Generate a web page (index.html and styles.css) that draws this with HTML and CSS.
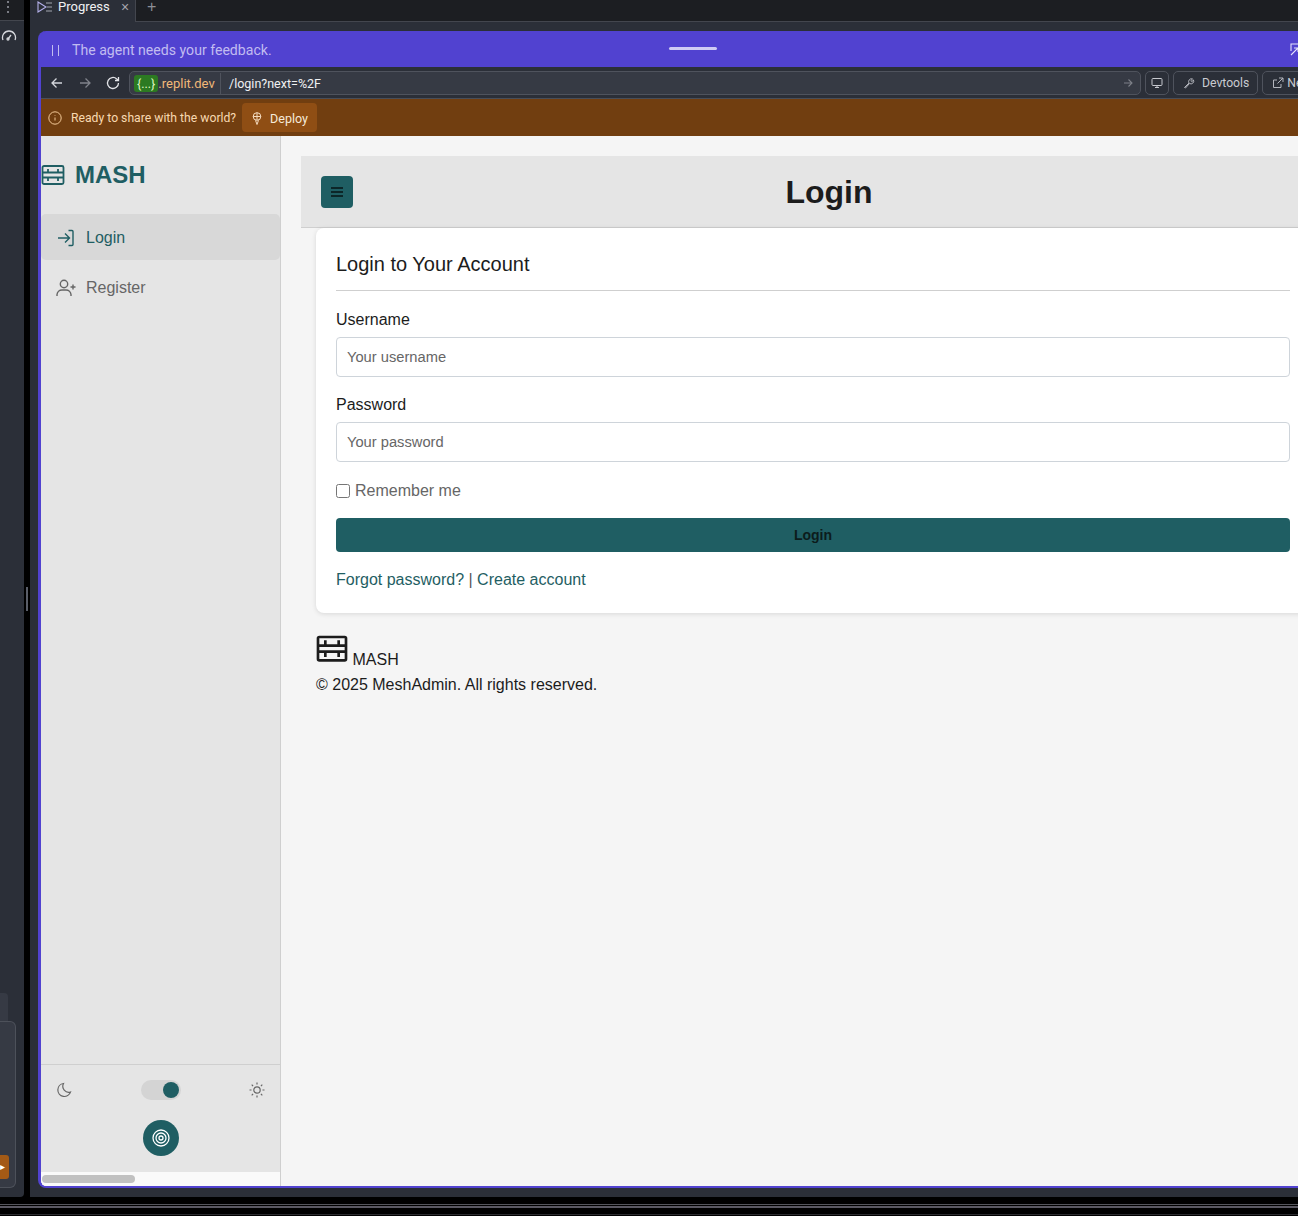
FILE: index.html
```html
<!DOCTYPE html>
<html lang="en">
<head>
  <meta charset="UTF-8">
  <meta name="viewport" content="width=device-width, initial-scale=1.0">
  <title>MASH Login</title>
  <link rel="stylesheet" href="styles.css">
</head>
<body>

  <div class="workspace">
    <!-- left editor pane, mostly cut off -->
    <aside class="leftPane">
      <div class="leftTop">
        <svg class="dots" width="4" height="14" viewBox="0 0 4 14"><circle cx="2" cy="2" r="1" fill="#9a9da6"/><circle cx="2" cy="7" r="1" fill="#9a9da6"/><circle cx="2" cy="12" r="1" fill="#9a9da6"/></svg>
      </div>
      <div class="leftGauge">
        <svg width="16" height="12" viewBox="0 0 16 12" fill="none" stroke="#d5d7dc" stroke-width="1.3"><path d="M2 10a6.500 6.500 0 1 1 12 0"/><path d="M7 9l3-4"/><circle cx="7" cy="9" r="1"/></svg>
      </div>
      <div class="leftTab"></div>
      <div class="leftBox">
        <span class="leftOrange">&#9656;</span>
      </div>
    </aside>

    <div class="divider"><span class="grip"></span></div>

    <section class="rightPane">
      <div class="tabBar">
        <div class="tab">
          <svg width="16" height="12" viewBox="0 0 16 12" fill="none" stroke="#b4b1ea" stroke-width="1.1"><path d="M1 1l8 5-8 5z"/><path d="M9 2h6M10 6h5M9 10h6" stroke="#a4a7b0"/></svg>
          <span class="tabTitle">Progress</span>
          <span class="tabClose">&#215;</span>
        </div>
        <span class="tabAdd">+</span>
      </div>

      <div class="previewWrap">
        <div class="preview">
          <div class="agentBar">
            <span class="pause"><i></i><i></i></span>
            <span class="agentText">The agent needs your feedback.</span>
            <span class="dragHandle"></span>
            <svg class="popout" width="14" height="14" viewBox="0 0 14 14" fill="none" stroke="#e4e2fa" stroke-width="1.1"><path d="M1 9V2h12v9H8"/><path d="M1 13l7-7M4 6h4v4"/></svg>
          </div>

          <div class="urlBar">
            <svg class="navIcon" width="14" height="14" viewBox="0 0 14 14" fill="none" stroke="#d4d6db" stroke-width="1.3"><path d="M12 7H2M6.500 2.500L2 7l4.500 4.500"/></svg>
            <svg class="navIcon" width="14" height="14" viewBox="0 0 14 14" fill="none" stroke="#80838b" stroke-width="1.3"><path d="M2 7h10M7.500 2.500L12 7l-4.500 4.500"/></svg>
            <svg class="navIcon" width="16" height="16" viewBox="0 0 16 16" fill="none" stroke="#e2e3e7" stroke-width="1.3"><path d="M13.500 8A5.500 5.500 0 1 1 11.700 3.900L13.500 5.500"/><path d="M13.500 2v3.500H10"/></svg>
            <div class="urlField">
              <div class="urlHost"><span class="urlBadge">{...}</span><span class="urlDomain">.replit.dev</span></div>
              <span class="urlPath">/login?next=%2F</span>
              <svg class="urlGo" width="10" height="10" viewBox="0 0 10 10" fill="none" stroke="#7c7f87" stroke-width="1.1"><path d="M1 5h8M5.500 1.500L9 5 5.500 8.500"/></svg>
            </div>
            <button class="urlBtn iconOnly">
              <svg width="12" height="12" viewBox="0 0 12 12" fill="none" stroke="#c6c8ce" stroke-width="1"><rect x="1" y="1.500" width="10" height="7" rx="1"/><path d="M6 8.500v2M4 10.500h4"/></svg>
            </button>
            <button class="urlBtn">
              <svg width="12" height="12" viewBox="0 0 12 12" fill="none" stroke="#b3b5bc" stroke-width="1"><path d="M1.500 10.500l4.500-4.500a2.800 2.800 0 0 1 3.500-4L7.800 3.700l1 1 1.700-1.700a2.800 2.800 0 0 1-4 3.500l-4 4.500z"/></svg>
              <span>Devtools</span>
            </button>
            <button class="urlBtn">
              <svg width="12" height="12" viewBox="0 0 12 12" fill="none" stroke="#b3b5bc" stroke-width="1"><path d="M9 7v3.500H1.500V3H5M7 1h4v4M11 1L5.500 6.500"/></svg>
              <span>New tab</span>
            </button>
          </div>

          <div class="deployBar">
            <svg width="14" height="14" viewBox="0 0 14 14" fill="none" stroke="#f3c998" stroke-width="1"><circle cx="7" cy="7" r="6.200"/><path d="M7 6.500v3M7 4.200v.6"/></svg>
            <span class="deployText">Ready to share with the world?</span>
            <button class="deployBtn">
              <svg width="12" height="13" viewBox="0 0 12 13" fill="none" stroke="#f5dcc0" stroke-width="1"><circle cx="6" cy="4.500" r="3.800"/><path d="M2.200 4.500h7.600M6 .7v7.600M4.500 8.300L6 12.500l1.500-4.200"/></svg>
              <span>Deploy</span>
            </button>
          </div>

          <div class="app">
            <nav class="sidebar">
              <div class="brand">
                <svg width="24" height="24" viewBox="0 0 24 24" fill="none" stroke="#1f5e63" stroke-width="1.800"><rect x="1.500" y="3" width="21" height="18" rx="1.500"/><path d="M1.500 9.500h21M1.500 14.500h21M7 6v3.500M17 6v3.500M7 14.500V18M17 14.500V18"/></svg>
                <span class="brandName">MASH</span>
              </div>
              <a class="navLink active">
                <svg width="20" height="20" viewBox="0 0 20 20" fill="none" stroke="#1f5e63" stroke-width="1.400"><path d="M12.500 2.500h3.500a1 1 0 0 1 1 1v13a1 1 0 0 1-1 1h-3.500"/><path d="M2 10h11M9 5.500l4.500 4.500L9 14.500"/></svg>
                <span>Login</span>
              </a>
              <a class="navLink">
                <svg width="20" height="20" viewBox="0 0 20 20" fill="none" stroke="#666" stroke-width="1.400"><circle cx="8" cy="6" r="3.700"/><path d="M1 18v-1.500A5 5 0 0 1 6 12h4a5 5 0 0 1 5 4.500V18"/><path d="M14.500 9h5M17 6.500v5"/></svg>
                <span>Register</span>
              </a>
              <div class="sidebarBottom">
                <div class="themeRow">
                  <svg width="16" height="16" viewBox="0 0 16 16" fill="none" stroke="#666" stroke-width="1.200"><path d="M7.500 1.500a6.500 6.500 0 1 0 7 8.500A6 6 0 0 1 7.500 1.500z"/></svg>
                  <span class="toggle"><span class="knob"></span></span>
                  <svg width="16" height="16" viewBox="0 0 16 16" fill="none" stroke="#666" stroke-width="1.200"><circle cx="8" cy="8" r="3.200"/><path d="M8 .5v2M8 13.500v2M.5 8h2M13.500 8h2M2.700 2.700l1.400 1.400M11.900 11.900l1.400 1.400M2.700 13.300l1.400-1.400M11.900 4.100l1.400-1.400"/></svg>
                </div>
                <div class="targetRow">
                  <span class="targetBtn">
                    <svg width="18" height="18" viewBox="0 0 18 18" fill="none" stroke="#fff" stroke-width="1.300"><circle cx="9" cy="9" r="8"/><circle cx="9" cy="9" r="5"/><circle cx="9" cy="9" r="2"/></svg>
                  </span>
                </div>
              </div>
              <div class="hScroll"><span class="hThumb"></span></div>
            </nav>

            <main class="main">
              <header class="pageHeader">
                <button class="menuBtn">
                  <svg width="12" height="10" viewBox="0 0 12 10" fill="none" stroke="#0c2628" stroke-width="1.800"><path d="M0 1h12M0 5h12M0 9h12"/></svg>
                </button>
                <h1 class="pageTitle">Login</h1>
              </header>

              <div class="card">
                <h2 class="cardTitle">Login to Your Account</h2>
                <form class="loginForm">
                  <label class="fieldLabel" for="username">Username</label>
                  <input class="fieldInput" id="username" type="text" placeholder="Your username">
                  <label class="fieldLabel" for="password">Password</label>
                  <input class="fieldInput" id="password" type="password" placeholder="Your password">
                  <label class="remember"><input type="checkbox"><span>Remember me</span></label>
                  <button class="submitBtn" type="button">Login</button>
                </form>
                <p class="cardLinks"><a>Forgot password?</a> | <a>Create account</a></p>
              </div>

              <footer class="pageFooter">
                <div class="footerBrand">
                  <svg class="footerIcon" width="32" height="32" viewBox="0 0 24 24" fill="none" stroke="#1c1c1c" stroke-width="2"><rect x="1.500" y="3" width="21" height="17.500" rx="1"/><path d="M1.500 9.500h21M1.500 14h21M7 5.500v4M17 5.500v4M7 14v4M17 14v4"/></svg>
                  <span>MASH</span>
                </div>
                <p class="copyright">&copy; 2025 MeshAdmin. All rights reserved.</p>
              </footer>
            </main>
          </div>
        </div>
      </div>
    </section>
  </div>

  <div class="bottomStrip"></div>

</body>
</html>
```

FILE: styles.css
```css
html, body {
  margin: 0;
  padding: 0;
  height: 100%;
}

body {
  width: 1298px;
  height: 1216px;
  overflow: hidden;
  background-color: black;
  font-family: "Liberation Sans", sans-serif;
  color: #1c1c1c;
}

svg {
  display: block;
  flex-shrink: 0;
}

button {
  font-family: inherit;
}

.workspace {
  display: flex;
  height: 1197px;
}

/* left pane */
.leftPane {
  width: 24px;
  flex-shrink: 0;
  display: flex;
  flex-direction: column;
  background-color: #2b2f38;
  border-radius: 0 0 4px 0;
}

.leftTop {
  height: 21px;
  padding-left: 6px;
  background-color: #1c1e22;
  border-bottom: 1px solid #43464e;
  box-sizing: border-box;
}

.leftGauge {
  padding: 9px 0 0 1px;
}

.leftTab {
  margin-top: auto;
  width: 8px;
  height: 28px;
  background-color: #363a44;
  border-radius: 0 4px 0 0;
}

.leftBox {
  margin-bottom: 9px;
  height: 167px;
  box-sizing: border-box;
  border: 1px solid #4d515a;
  border-left: none;
  border-radius: 0 6px 6px 0;
  width: 16px;
  background-color: #363a44;
  display: flex;
  align-items: flex-end;
}

.leftOrange {
  width: 9px;
  height: 24px;
  margin-bottom: 8px;
  background-color: #a35a16;
  border-radius: 0 3px 3px 0;
  color: white;
  font-size: 10px;
  line-height: 24px;
  overflow: hidden;
}

.divider {
  width: 6px;
  flex-shrink: 0;
  display: flex;
  align-items: center;
  justify-content: center;
}

.grip {
  width: 2px;
  height: 24px;
  background-color: #5a5e68;
}

/* right pane */
.rightPane {
  flex: 1;
  min-width: 0;
  display: flex;
  flex-direction: column;
  background-color: #2b2f38;
}

.tabBar {
  height: 22px;
  flex-shrink: 0;
  box-sizing: border-box;
  display: flex;
  align-items: center;
  background-color: #1c1e22;
  border-bottom: 1px solid #43464e;
}

.tab {
  width: 106px;
  height: 22px;
  box-sizing: border-box;
  display: flex;
  align-items: center;
  gap: 5px;
  padding: 0 0 8px 7px;
  background-color: #2b2f38;
  border-right: 1px solid #43464e;
  color: #f0f1f3;
}

.tabTitle {
  width: 52px;
  font-family: "Roboto", sans-serif;
  font-size: 13px;
}

.tabClose {
  margin-left: 6px;
  color: #a6a8af;
  font-size: 14px;
  line-height: 14px;
}

.tabAdd {
  margin: 0 0 8px 11px;
  color: #8c8f97;
  font-size: 16px;
  line-height: 16px;
}

.previewWrap {
  flex: 1;
  min-height: 0;
  padding: 9px 0 9px 8px;
}

.preview {
  width: 1400px;
  height: 100%;
  box-sizing: border-box;
  display: flex;
  flex-direction: column;
  background-color: #5142d0;
  border-radius: 8px 0 0 8px;
  border: solid #5142d0;
  border-width: 0 0 2px 3px;
  overflow: hidden;
}

.agentBar {
  height: 36px;
  flex-shrink: 0;
  width: 1257px;
  display: flex;
  align-items: center;
  padding: 2px 0 0 11px;
  box-sizing: border-box;
  position: relative;
  color: #c1bcf0;
  font-family: "Roboto", sans-serif;
  font-size: 14.100px;
}

.pause {
  display: flex;
  gap: 5px;
  margin-right: 13px;
}

.pause i {
  width: 1px;
  height: 11px;
  background-color: #c1bcf0;
}

.dragHandle {
  position: absolute;
  left: 628px;
  top: 16px;
  width: 48px;
  height: 3px;
  border-radius: 2px;
  background-color: #cfcbf4;
}

.popout {
  position: absolute;
  right: -6px;
  top: 11px;
}

.urlBar {
  height: 32px;
  flex-shrink: 0;
  box-sizing: border-box;
  display: flex;
  align-items: center;
  padding-left: 9px;
  background-color: #2b2f38;
  border-bottom: 1px solid #4a4e58;
}

.navIcon {
  margin-right: 14px;
}

.navIcon:nth-child(2) {
  margin-right: 13px;
}

.navIcon:nth-child(3) {
  margin-right: 8px;
}

.urlField {
  width: 1012px;
  height: 24px;
  box-sizing: border-box;
  display: flex;
  align-items: center;
  padding-top: 1px;
  background-color: #363a44;
  border: 1px solid #4f535d;
  border-radius: 5px;
  color: #f0f1f3;
  font-family: "Roboto", sans-serif;
  font-size: 12.500px;
}

.urlHost {
  display: flex;
  align-items: center;
  width: 91px;
  box-sizing: border-box;
  height: 100%;
  padding: 0 0 0 4px;
  border-right: 1px solid #4f535d;
}

.urlBadge {
  background-color: #2c7a22;
  color: #dff3c0;
  padding: 2px 3px;
  border-radius: 3px;
  line-height: 13px;
}

.urlDomain {
  font-size: 13px;
  color: #f1b878;
}

.urlPath {
  margin-left: 8px;
}

.urlGo {
  margin-left: auto;
  margin-right: 7px;
}

.urlBtn {
  height: 24px;
  box-sizing: border-box;
  margin-left: 4px;
  padding: 0 8px 0 9px;
  display: flex;
  align-items: center;
  gap: 7px;
  background: none;
  border: 1px solid #4f535d;
  border-radius: 5px;
  color: #c9cbd1;
  font-family: "Roboto", sans-serif;
  font-size: 12.200px;
}

.urlBtn:last-child {
  gap: 3px;
}

.iconOnly {
  padding: 0 5px;
  margin-left: 4px;
}

.deployBar {
  height: 37px;
  flex-shrink: 0;
  box-sizing: border-box;
  display: flex;
  align-items: center;
  padding-left: 7px;
  background-color: #713e10;
  font-family: "Roboto", sans-serif;
  font-size: 12.200px;
}

.deployText {
  margin: 1px 0 0 9px;
  color: #f8d9b0;
}

.deployBtn {
  margin-left: 6px;
  height: 29px;
  padding: 1px 9px 0 9px;
  display: flex;
  align-items: center;
  gap: 7px;
  background-color: #8f4e14;
  border: none;
  border-radius: 4px;
  color: #f6ead9;
  font-family: "Roboto", sans-serif;
  font-size: 12.500px;
}

/* the app inside the preview */
.app {
  flex: 1;
  min-height: 0;
  display: flex;
  background-color: #f5f5f5;
}

.sidebar {
  width: 240px;
  flex-shrink: 0;
  box-sizing: border-box;
  display: flex;
  flex-direction: column;
  background-color: #e5e5e5;
  border-right: 1px solid #cfcfcf;
}

.brand {
  display: flex;
  align-items: center;
  gap: 10px;
  height: 78px;
}

.brandName {
  color: #1f5e63;
  font-size: 24px;
  font-weight: bold;
}

.navLink {
  height: 46px;
  display: flex;
  align-items: center;
  gap: 10px;
  padding: 2px 0 0 15px;
  box-sizing: border-box;
  margin-bottom: 4px;
  border-radius: 5px;
  color: #666;
  font-size: 16px;
}

.navLink.active {
  background-color: #d8d8d8;
  color: #1f5e63;
}

.sidebarBottom {
  margin-top: auto;
  border-top: 1px solid #cfcfcf;
  padding-bottom: 16px;
}

.themeRow {
  display: flex;
  align-items: center;
  justify-content: space-between;
  padding: 15px 15px 0 15px;
}

.toggle {
  width: 40px;
  height: 20px;
  display: flex;
  justify-content: flex-end;
  align-items: center;
  padding-right: 2px;
  box-sizing: border-box;
  border-radius: 10px;
  background-color: #d4d4d4;
}

.knob {
  width: 16px;
  height: 16px;
  border-radius: 50%;
  background-color: #1f5e63;
}

.targetRow {
  display: flex;
  justify-content: center;
  margin-top: 20px;
}

.targetBtn {
  width: 36px;
  height: 36px;
  display: flex;
  align-items: center;
  justify-content: center;
  border-radius: 50%;
  background-color: #1f5e63;
}

.hScroll {
  height: 14px;
  padding: 3px 1px 0 1px;
  box-sizing: border-box;
  background-color: #fafafa;
}

.hThumb {
  display: block;
  width: 93px;
  height: 8px;
  border-radius: 4px;
  background-color: #c1c1c1;
}

.main {
  width: 1024px;
  flex-shrink: 0;
  margin-left: 20px;
  padding-top: 20px;
}

.pageHeader {
  height: 72px;
  box-sizing: border-box;
  display: flex;
  align-items: center;
  padding: 0 20px;
  background-color: #e5e5e5;
  border-bottom: 1px solid #cfcfcf;
}

.menuBtn {
  width: 32px;
  height: 32px;
  padding: 0;
  display: flex;
  align-items: center;
  justify-content: center;
  background-color: #1f5e63;
  border: none;
  border-radius: 4px;
}

.pageTitle {
  flex: 1;
  margin: 2px 0 0 0;
  text-align: center;
  font-size: 32px;
  font-weight: bold;
  color: #1c1c1c;
}

.card {
  margin: 0 15px;
  padding: 20px;
  height: 385px;
  box-sizing: border-box;
  background-color: white;
  border-radius: 8px;
  box-shadow: 0 1px 5px rgba(0, 0, 0, 0.12);
}

.cardTitle {
  margin: 0;
  padding: 4px 0 14px 0;
  border-bottom: 1px solid #cfcfcf;
  font-size: 20px;
  font-weight: normal;
  line-height: 24px;
}

.loginForm {
  display: flex;
  flex-direction: column;
  padding-top: 19px;
}

.fieldLabel {
  font-size: 16px;
  line-height: 20px;
  margin-bottom: 7px;
}

.fieldInput {
  height: 40px;
  box-sizing: border-box;
  margin-bottom: 18px;
  padding: 0 10px;
  background-color: white;
  border: 1px solid #ced4da;
  border-radius: 4px;
  font-family: "Liberation Sans", sans-serif;
  font-size: 14.700px;
}

.fieldInput::placeholder {
  color: #666;
  opacity: 1;
}

.remember {
  display: flex;
  align-items: center;
  gap: 5px;
  height: 22px;
  color: #666;
  font-size: 16px;
}

.remember input {
  margin: 0;
  width: 14px;
  height: 14px;
}

.submitBtn {
  height: 34px;
  margin-top: 16px;
  background-color: #1f5e63;
  border: none;
  border-radius: 4px;
  color: #0c1c1c;
  font-size: 14px;
  font-weight: bold;
}

.cardLinks {
  margin: 18px 0 0 0;
  line-height: 20px;
  font-size: 16px;
  color: #555;
}

.cardLinks a {
  color: #1f5e63;
}

.pageFooter {
  margin: 20px 15px 0 15px;
  font-size: 16px;
}

.footerIcon {
  display: inline-block;
  vertical-align: baseline;
}

.copyright {
  margin: 7px 0 0 0;
}

.bottomStrip {
  height: 19px;
  box-sizing: border-box;
  padding-top: 7px;
  background-color: black;
  background-image: linear-gradient(#55555c, #55555c), linear-gradient(#5a5862, #5a5862), linear-gradient(#2c2c30, #2c2c30);
  background-origin: content-box;
  background-clip: content-box;
  background-size: 100% 1px, 100% 2px, 100% 1px;
  background-position: 0 0, 0 2px, 0 10px;
  background-repeat: no-repeat;
}
```
